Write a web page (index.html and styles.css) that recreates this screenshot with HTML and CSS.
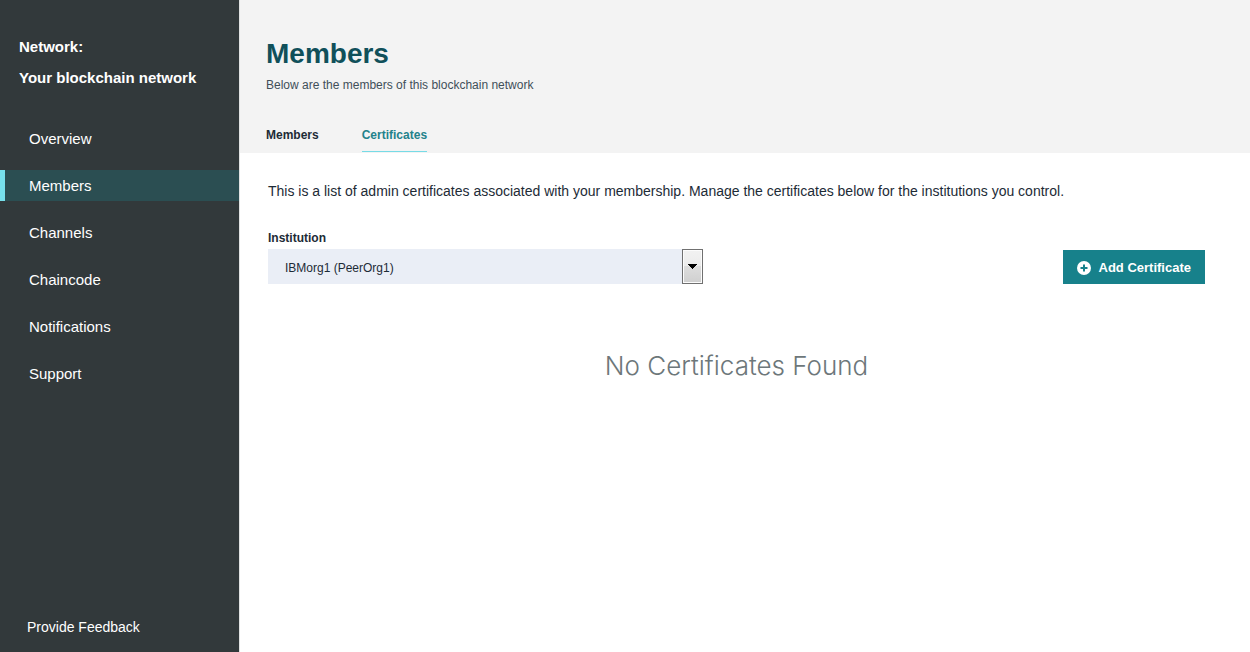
FILE: index.html
```html
<!DOCTYPE html>
<html lang="en">
<head>
  <meta charset="utf-8">
  <meta name="viewport" content="width=device-width, initial-scale=1">
  <title>Members</title>
  <link rel="stylesheet" href="styles.css">
</head>
<body>
  <div class="app">
    <aside class="sidebar">
      <div class="network">
        <p class="network-line">Network:</p>
        <p class="network-line">Your blockchain network</p>
      </div>
      <nav class="nav" aria-label="Main">
        <a class="nav-item" href="#overview">Overview</a>
        <a class="nav-item nav-item-active" href="#members" aria-current="page">Members</a>
        <a class="nav-item" href="#channels">Channels</a>
        <a class="nav-item" href="#chaincode">Chaincode</a>
        <a class="nav-item" href="#notifications">Notifications</a>
        <a class="nav-item" href="#support">Support</a>
      </nav>
      <a class="feedback" href="#feedback">Provide Feedback</a>
    </aside>
    <main class="main">
      <header class="header">
        <h1 class="title">Members</h1>
        <p class="subtitle">Below are the members of this blockchain network</p>
        <nav class="tabs" aria-label="Members views">
          <a class="tab" href="#members-list">Members</a>
          <a class="tab tab-active" href="#certificates" aria-current="true">Certificates</a>
        </nav>
      </header>
      <section class="content">
        <p class="intro">This is a list of admin certificates associated with your membership. Manage the certificates below for the institutions you control.</p>
        <div class="toolbar">
          <div class="field">
            <label class="label" for="institution">Institution</label>
            <div class="select-box">
              <select class="select" id="institution">
                <option>IBMorg1 (PeerOrg1)</option>
              </select>
              <span class="select-arrow" aria-hidden="true">
                <svg width="9" height="5" viewBox="0 0 9 5" shape-rendering="crispEdges"><path d="M0 0h9v1h-1v1h-1v1h-1v1h-1v1h-1v-1h-1v-1h-1v-1h-1v-1h-1z"/></svg>
              </span>
            </div>
          </div>
          <button class="add" type="button">
            <svg width="14" height="14" viewBox="0 0 14 14" aria-hidden="true"><circle cx="7" cy="7" r="7" fill="#fff"/><path d="M7 3.5v7M3.5 7h7" stroke="#17818b" stroke-width="2"/></svg>
            <span>Add Certificate</span>
          </button>
        </div>
        <p class="empty">No Certificates Found</p>
      </section>
    </main>
  </div>
</body>
</html>
```
FILE: styles.css
```css
* {
  box-sizing: border-box;
}

body {
  margin: 0;
  background: #fff;
  color: #1d2b36;
  font-family: "Liberation Sans", Arial, sans-serif;
  font-size: 14px;
}

p,
h1 {
  margin: 0;
}

a {
  color: inherit;
  text-decoration: none;
}

.app {
  display: flex;
  min-height: 100vh;
}

.sidebar {
  display: flex;
  flex: 0 0 240px;
  flex-direction: column;
  padding: 31px 0 15px;
  border-right: 1px solid #e0e2e2;
  background: #32393b;
  color: #fff;
}

.network {
  padding-left: 19px;
}

.network-line {
  font-size: 15px;
  font-weight: 700;
  line-height: 31px;
}

.nav {
  display: flex;
  flex-direction: column;
  gap: 16px;
  margin-top: 30px;
}

.nav-item {
  padding-left: 29px;
  font-size: 15px;
  line-height: 31px;
}

.nav-item-active {
  padding-left: 24px;
  border-left: 5px solid #77e0ec;
  background: #2b4e52;
}

.feedback {
  margin-top: auto;
  padding-left: 27px;
  line-height: 20px;
}

.main {
  flex: 1;
  min-width: 0;
}

.header {
  padding: 37px 26px 1px;
  background: #f3f3f3;
}

.title {
  color: #10505a;
  font-size: 28px;
  line-height: 34px;
}

.subtitle {
  margin-top: 4px;
  color: #414f59;
  font-size: 12px;
  line-height: 20px;
}

.tabs {
  display: flex;
  gap: 43px;
  margin-top: 30px;
}

.tab {
  padding-bottom: 5px;
  border-bottom: 1px solid transparent;
  font-size: 12px;
  font-weight: 700;
  line-height: 21px;
}

.tab-active {
  border-color: #77dbe6;
  color: #23828b;
}

.content {
  padding: 28px 45px 40px 28px;
}

.intro {
  font-size: 14px;
  line-height: 20px;
}

.toolbar {
  display: flex;
  align-items: flex-end;
  justify-content: space-between;
  gap: 24px;
  margin-top: 27px;
}

.field {
  flex: 0 1 435px;
}

.label {
  display: block;
  font-size: 12px;
  font-weight: 700;
  line-height: 20px;
}

.select-box {
  position: relative;
  margin-top: 1px;
}

.select {
  width: 100%;
  height: 35px;
  padding: 2px 30px 0 17px;
  border: 0;
  border-radius: 0;
  appearance: none;
  background: #eaeef6;
  color: #1d2b36;
  font-family: inherit;
  font-size: 12px;
}

.select-arrow {
  position: absolute;
  top: 0;
  right: 0;
  bottom: 0;
  display: flex;
  align-items: center;
  justify-content: center;
  width: 21px;
  border: 1px solid #707070;
  background: linear-gradient(#f2f2f2, #ebebeb 50%, #dddddd 50%, #cfcfcf);
  box-shadow: inset 0 0 0 1px #fcfcfc;
  pointer-events: none;
}

.add {
  display: flex;
  flex: none;
  align-items: center;
  gap: 8px;
  height: 34px;
  padding: 1px 14px 0;
  border: 0;
  background: #17818b;
  color: #fff;
  font-family: inherit;
  font-size: 13px;
  font-weight: 700;
}

.empty {
  margin-top: 64px;
  color: #6d777a;
  font-family: Inter, "Liberation Sans", sans-serif;
  font-size: 26px;
  font-weight: 300;
  line-height: 36px;
  text-align: center;
}
```
